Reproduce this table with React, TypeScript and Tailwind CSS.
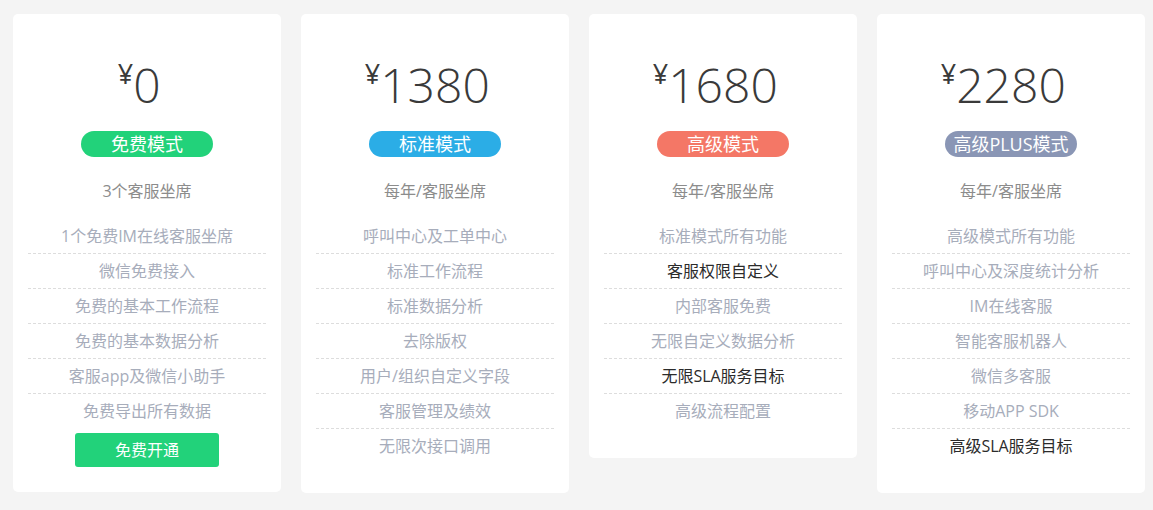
import React from "react";

type Feature = { text: string; dark?: boolean };

type Plan = {
  price: string;
  name: string;
  badge: string;
  seat: string;
  features: Feature[];
  button?: string;
};

const plans: Plan[] = [
  {
    price: "0",
    name: "免费模式",
    badge: "bg-[#22d27a]",
    seat: "3个客服坐席",
    features: [
      { text: "1个免费IM在线客服坐席" },
      { text: "微信免费接入" },
      { text: "免费的基本工作流程" },
      { text: "免费的基本数据分析" },
      { text: "客服app及微信小助手" },
      { text: "免费导出所有数据" },
    ],
    button: "免费开通",
  },
  {
    price: "1380",
    name: "标准模式",
    badge: "bg-[#2badE6]",
    seat: "每年/客服坐席",
    features: [
      { text: "呼叫中心及工单中心" },
      { text: "标准工作流程" },
      { text: "标准数据分析" },
      { text: "去除版权" },
      { text: "用户/组织自定义字段" },
      { text: "客服管理及绩效" },
      { text: "无限次接口调用" },
    ],
  },
  {
    price: "1680",
    name: "高级模式",
    badge: "bg-[#f47766]",
    seat: "每年/客服坐席",
    features: [
      { text: "标准模式所有功能" },
      { text: "客服权限自定义", dark: true },
      { text: "内部客服免费" },
      { text: "无限自定义数据分析" },
      { text: "无限SLA服务目标", dark: true },
      { text: "高级流程配置" },
    ],
  },
  {
    price: "2280",
    name: "高级PLUS模式",
    badge: "bg-[#8a96b5]",
    seat: "每年/客服坐席",
    features: [
      { text: "高级模式所有功能" },
      { text: "呼叫中心及深度统计分析" },
      { text: "IM在线客服" },
      { text: "智能客服机器人" },
      { text: "微信多客服" },
      { text: "移动APP SDK" },
      { text: "高级SLA服务目标", dark: true },
    ],
  },
];

function PlanCard({ plan }: { plan: Plan }) {
  return (
    <div
      className={[
        "w-[268px] rounded-[5px] bg-white pt-[47px] text-center",
        plan.button ? "pb-[25px]" : "pb-[30px]",
      ].join(" ")}
    >
      <div className="flex justify-center">
        <div className="relative text-[48px] font-light leading-none text-[#3a3a3a]">
          <span className="absolute right-full top-[-1px] text-[27px] font-normal leading-none">¥</span>
          {plan.price}
        </div>
      </div>

      <div className="mt-[22px] flex justify-center">
        <span
          className={[
            "flex h-[26px] w-[132px] items-center justify-center rounded-full text-[18px] leading-none text-white",
            plan.badge,
          ].join(" ")}
        >
          {plan.name}
        </span>
      </div>

      <div className="mt-[17px] text-base leading-[34px] text-[#8c8c8c]">{plan.seat}</div>

      <ul className="mx-[15px] mt-[11px]">
        {plan.features.map((f, i) => (
          <li
            key={f.text}
            className={[
              "text-base leading-[34px]",
              f.dark ? "text-[#2b2b2b]" : "text-[#a7adbb]",
              i < plan.features.length - 1 ? "border-b border-dashed border-[#dddddd]" : "",
            ].join(" ")}
          >
            {f.text}
          </li>
        ))}
      </ul>

      {plan.button && (
        <div className="mt-[5px] flex justify-center">
          <button
            type="button"
            className="h-[34px] w-[144px] rounded-[3px] bg-[#22d27a] text-base font-normal text-white"
          >
            {plan.button}
          </button>
        </div>
      )}
    </div>
  );
}

export default function App() {
  return (
    <div
      className="min-h-[510px] bg-[#f4f4f4] pl-[13px] pt-[14px]"
      style={{ fontFamily: '"Open Sans", "Noto Sans CJK SC", sans-serif' }}
    >
      <div className="flex items-start gap-5">
        {plans.map((p) => (
          <PlanCard key={p.name} plan={p} />
        ))}
      </div>
    </div>
  );
}
